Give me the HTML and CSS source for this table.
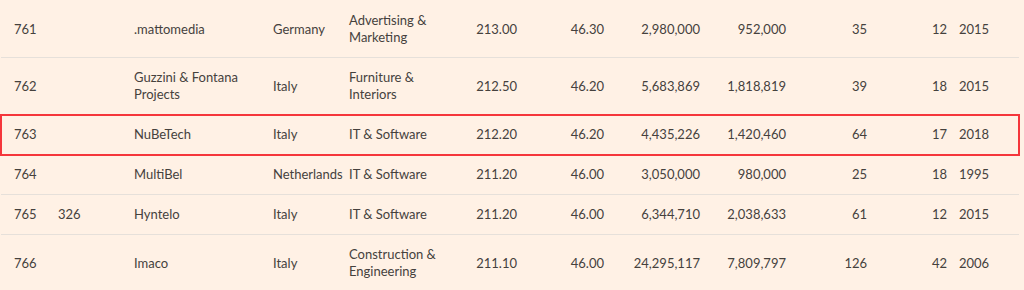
FILE: index.html
```html
<!DOCTYPE html>
<html lang="en">
  <head>
    <meta charset="UTF-8" />
    <meta name="viewport" content="width=device-width, initial-scale=1.0" />
    <title>Company ranking</title>
    <link rel="stylesheet" href="styles.css">
  </head>
  <body>
    <div class="table-wrap">
      <table class="ranking">
        <colgroup>
          <col class="c-rank" />
          <col class="c-prev" />
          <col class="c-name" />
          <col class="c-country" />
          <col class="c-sector" />
          <col class="c-rate" />
          <col class="c-cagr" />
          <col class="c-rev" />
          <col class="c-rev0" />
          <col class="c-emp" />
          <col class="c-emp0" />
          <col class="c-year" />
        </colgroup>
        <tbody>
          <tr>
            <td class="rank">761</td><td></td><td>.mattomedia</td><td class="country">Germany</td>
            <td>Advertising &amp; Marketing</td><td class="num">213.00</td><td class="num">46.30</td>
            <td class="num">2,980,000</td><td class="num">952,000</td><td class="num">35</td>
            <td class="num">12</td><td>2015</td>
          </tr>
          <tr>
            <td class="rank">762</td><td></td><td>Guzzini &amp; Fontana Projects</td><td class="country">Italy</td>
            <td>Furniture &amp; Interiors</td><td class="num">212.50</td><td class="num">46.20</td>
            <td class="num">5,683,869</td><td class="num">1,818,819</td><td class="num">39</td>
            <td class="num">18</td><td>2015</td>
          </tr>
          <tr class="highlight">
            <td class="rank">763</td><td></td><td>NuBeTech</td><td class="country">Italy</td>
            <td>IT &amp; Software</td><td class="num">212.20</td><td class="num">46.20</td>
            <td class="num">4,435,226</td><td class="num">1,420,460</td><td class="num">64</td>
            <td class="num">17</td><td>2018</td>
          </tr>
          <tr>
            <td class="rank">764</td><td></td><td>MultiBel</td><td class="country">Netherlands</td>
            <td>IT &amp; Software</td><td class="num">211.20</td><td class="num">46.00</td>
            <td class="num">3,050,000</td><td class="num">980,000</td><td class="num">25</td>
            <td class="num">18</td><td>1995</td>
          </tr>
          <tr>
            <td class="rank">765</td><td>326</td><td>Hyntelo</td><td class="country">Italy</td>
            <td>IT &amp; Software</td><td class="num">211.20</td><td class="num">46.00</td>
            <td class="num">6,344,710</td><td class="num">2,038,633</td><td class="num">61</td>
            <td class="num">12</td><td>2015</td>
          </tr>
          <tr>
            <td class="rank">766</td><td></td><td>Imaco</td><td class="country">Italy</td>
            <td>Construction &amp; Engineering</td><td class="num">211.10</td><td class="num">46.00</td>
            <td class="num">24,295,117</td><td class="num">7,809,797</td><td class="num">126</td>
            <td class="num">42</td><td>2006</td>
          </tr>
        </tbody>
      </table>
    </div>
  </body>
</html>
```

FILE: styles.css
```css
body {
  margin: 0;
  background-color: #fff1e5;
  font-family: Lato, "Open Sans", sans-serif;
  font-size: 13px;
  line-height: 17px;
  color: #45413d;
}
.table-wrap {
  padding: 1px 0 0 1px;
}
.ranking {
  width: 1018px;
  table-layout: fixed;
  border-collapse: collapse;
}
.ranking td {
  padding: 11px 6px;
  vertical-align: middle;
  text-align: left;
  border-bottom: 1px solid #e6e0da;
}
.ranking td.rank {
  padding-left: 13px;
}
.ranking td.num {
  text-align: right;
}
.ranking td.country {
  white-space: nowrap;
}
.ranking tr.highlight {
  outline: 2px solid #f5363b;
  outline-offset: -1px;
}
.c-rank { width: 51px; }
.c-prev { width: 76px; }
.c-name { width: 139px; }
.c-country { width: 76px; }
.c-sector { width: 107px; }
.c-rate { width: 73px; }
.c-cagr { width: 87px; }
.c-rev { width: 96px; }
.c-rev0 { width: 86px; }
.c-emp { width: 81px; }
.c-emp0 { width: 80px; }
.c-year { width: 66px; }
```
